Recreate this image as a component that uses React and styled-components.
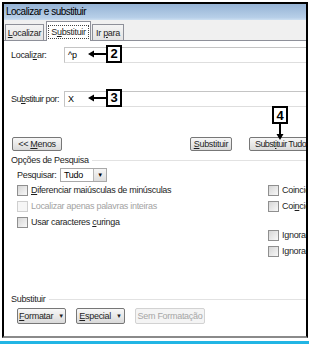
import styled, { createGlobalStyle } from "styled-components";

const GlobalStyle = createGlobalStyle`
  html, body {
    margin: 0;
    padding: 0;
    background: #fff;
  }
  body {
    font-family: "Liberation Sans", Arial, sans-serif;
    font-size: 9px;
    letter-spacing: -0.3px;
    color: #1e1e1e;
  }
`;

const Page = styled.div`
  width: 309px;
  height: 346px;
  overflow: hidden;
  background: #fff;
`;

const Window = styled.div`
  margin: 2px 0 0 2px;
  width: 306px;
  height: 336px;
  box-sizing: border-box;
  border: 2px solid #000;
  border-bottom: 2px solid #8a8a8a;
  display: flex;
  flex-direction: column;
  overflow: hidden;
`;

const TitleBar = styled.div`
  flex: none;
  height: 16px;
  line-height: 16px;
  padding-left: 2px;
  font-size: 10px;
  letter-spacing: -0.5px;
  color: #000;
  background: linear-gradient(#95b3d5, #b7cfe8 85%, #cddff1);
`;

const TabStrip = styled.div`
  flex: none;
  height: 21px;
  box-sizing: border-box;
  display: flex;
  align-items: flex-end;
  padding-left: 1px;
  background: #f0f0f0;
  border-bottom: 1px solid #8e9099;
`;

const Tab = styled.div`
  height: ${(p) => (p.$active ? 20 : 16)}px;
  width: ${(p) => p.$w}px;
  box-sizing: border-box;
  display: flex;
  align-items: center;
  justify-content: center;
  margin-right: ${(p) => (p.$active ? 1 : 2)}px;
  margin-bottom: ${(p) => (p.$active ? -1 : 0)}px;
  border: 1px solid #8e9099;
  border-bottom: none;
  background: ${(p) => (p.$active ? "#fff" : "linear-gradient(#f4f4f4, #e4e4e4)")};
  white-space: nowrap;
`;

const FocusText = styled.span`
  outline: 1px dotted #444;
  outline-offset: 1px;
  padding: 0 1px;
`;

const Body = styled.div`
  position: relative;
  flex: 1;
  width: 352px;
  padding-top: 6px;
  background: #fff;
`;

const FieldRow = styled.div`
  display: flex;
  align-items: center;
  height: 16px;
  padding-left: 7px;
  margin-top: ${(p) => p.$top || 0}px;
`;

const FieldLabel = styled.span`
  width: 53px;
  white-space: nowrap;
  letter-spacing: ${(p) => p.$ls || -0.3}px;
`;

const Field = styled.div`
  position: relative;
  width: 290px;
  height: 16px;
  box-sizing: border-box;
  border: 1px solid #c4c4c4;
  border-bottom-color: #dedede;
  padding-left: 3px;
  line-height: 14px;
  color: #000;
`;

const Callout = styled.div`
  position: absolute;
  left: 23px;
  top: -3px;
  display: flex;
  align-items: center;
`;

const Badge = styled.div`
  width: 16px;
  height: 18px;
  box-sizing: border-box;
  border: 2px solid #000;
  background: #fff;
  display: flex;
  align-items: center;
  justify-content: center;
  font-family: "Liberation Sans", Arial, sans-serif;
  font-weight: bold;
  font-size: 13px;
  letter-spacing: 0;
  color: #000;
`;

const DownCallout = styled.div`
  position: absolute;
  left: 268px;
  top: 65px;
  display: flex;
  flex-direction: column;
  align-items: center;
`;

const ButtonRow = styled.div`
  display: flex;
  align-items: center;
  margin-top: ${(p) => p.$top || 0}px;
  padding-left: ${(p) => p.$left || 0}px;
  gap: ${(p) => p.$gap || 0}px;
`;

const Button = styled.div`
  width: ${(p) => p.$w}px;
  height: ${(p) => p.$h || 14}px;
  box-sizing: border-box;
  display: flex;
  align-items: center;
  justify-content: ${(p) => (p.$start ? "flex-start" : "center")};
  padding-left: ${(p) => (p.$start ? 5 : 0)}px;
  gap: 5px;
  margin-left: ${(p) => p.$ml || 0}px;
  border: 1px solid ${(p) => (p.$disabled ? "#d2d2d2" : "#777")};
  border-radius: 2px;
  background: ${(p) =>
    p.$disabled ? "#f4f4f4" : "linear-gradient(#f7f7f7, #e9e9e9 50%, #d9d9d9)"};
  color: ${(p) => (p.$disabled ? "#a6a6a6" : "#1e1e1e")};
  white-space: nowrap;
  letter-spacing: ${(p) => p.$ls || -0.3}px;
`;

const Caret = styled.span`
  font-size: 6px;
`;

const GroupHeader = styled.div`
  display: flex;
  align-items: center;
  height: 12px;
  padding-left: 7px;
  margin-top: ${(p) => p.$top || 0}px;

  &::after {
    content: "";
    flex: 1;
    margin-left: 3px;
    border-top: 1px solid #e2e2e2;
  }
`;

const SearchRow = styled.div`
  display: flex;
  align-items: center;
  height: 14px;
  margin-top: 2px;
  padding-left: 13px;
`;

const SearchLabel = styled.span`
  width: 43px;
`;

const Select = styled.div`
  width: 47px;
  height: 14px;
  box-sizing: border-box;
  display: flex;
  border: 1px solid #a9a9a9;
  color: #000;
`;

const SelectValue = styled.span`
  flex: 1;
  padding-left: 3px;
  line-height: 12px;
`;

const SelectButton = styled.span`
  width: 12px;
  display: flex;
  align-items: center;
  justify-content: center;
  border-left: 1px solid #b5b5b5;
  background: linear-gradient(#f5f5f5, #dedede);
  font-size: 6px;
  color: #000;
`;

const Options = styled.div`
  display: grid;
  grid-template-columns: 264px 1fr;
`;

const OptionColumn = styled.div`
  display: flex;
  flex-direction: column;
  padding-left: ${(p) => p.$left || 0}px;
`;

const Option = styled.div`
  display: flex;
  align-items: center;
  height: 16px;
  margin-top: ${(p) => p.$top || 0}px;
  color: ${(p) => (p.$disabled ? "#a3a3a3" : "#1e1e1e")};
  white-space: nowrap;
`;

const Box = styled.span`
  flex: none;
  width: 11px;
  height: 11px;
  box-sizing: border-box;
  margin-right: 3px;
  border: 1px solid ${(p) => (p.$disabled ? "#cfcfcf" : "#8f8f8f")};
  background: ${(p) =>
    p.$disabled ? "#f6f6f6" : "linear-gradient(135deg, #d6d6d6, #f8f8f8)"};
`;

const CyanLine = styled.div`
  margin-top: 3px;
  height: 3px;
  background: #22b5e4;
`;

const LeftArrow = () => (
  <svg width="18" height="8" viewBox="0 0 18 8">
    <path d="M0 4 L6 0.5 L6 7.5 Z" fill="#000" />
    <rect x="5" y="3" width="13" height="2" fill="#000" />
  </svg>
);

const DownArrow = () => (
  <svg width="8" height="16" viewBox="0 0 8 16">
    <rect x="3" y="0" width="2" height="11" fill="#000" />
    <path d="M0.5 10 L7.5 10 L4 16 Z" fill="#000" />
  </svg>
);

const App = () => {
  return (
    <Page>
      <GlobalStyle />
      <Window>
        <TitleBar>Localizar e substituir</TitleBar>
        <TabStrip>
          <Tab $w={39}>
            <span>
              <u>L</u>ocalizar
            </span>
          </Tab>
          <Tab $w={45} $active>
            <FocusText>
              S<u>u</u>bstituir
            </FocusText>
          </Tab>
          <Tab $w={32}>
            <span>
              Ir <u>p</u>ara
            </span>
          </Tab>
        </TabStrip>
        <Body>
          <FieldRow>
            <FieldLabel>
              Locali<u>z</u>ar:
            </FieldLabel>
            <Field>
              ^p
              <Callout>
                <LeftArrow />
                <Badge>2</Badge>
              </Callout>
            </Field>
          </FieldRow>
          <FieldRow $top={28}>
            <FieldLabel $ls={-0.5}>
              Su<u>b</u>stituir por:
            </FieldLabel>
            <Field>
              X
              <Callout>
                <LeftArrow />
                <Badge>3</Badge>
              </Callout>
            </Field>
          </FieldRow>

          <DownCallout>
            <Badge>4</Badge>
            <DownArrow />
          </DownCallout>

          <ButtonRow $top={30} $left={8}>
            <Button $w={50}>
              <span>
                &lt;&lt; <u>M</u>enos
              </span>
            </Button>
            <Button $w={42} $ml={128}>
              <span>
                <u>S</u>ubstituir
              </span>
            </Button>
            <Button $w={66} $ml={17} $start $ls={-0.6}>
              <span>
                Subst<u>i</u>tuir Tudo
              </span>
            </Button>
          </ButtonRow>

          <GroupHeader $top={3}>Opções de Pesquisa</GroupHeader>
          <SearchRow>
            <SearchLabel>Pesquisar:</SearchLabel>
            <Select>
              <SelectValue>Tudo</SelectValue>
              <SelectButton>▼</SelectButton>
            </Select>
          </SearchRow>

          <Options>
            <OptionColumn $left={13}>
              <Option>
                <Box />
                <span>
                  <u>D</u>iferenciar maiúsculas de minúsculas
                </span>
              </Option>
              <Option $disabled>
                <Box $disabled />
                <span>Localizar apenas palavras inteiras</span>
              </Option>
              <Option>
                <Box />
                <span>
                  Usar caracteres <u>c</u>uringa
                </span>
              </Option>
            </OptionColumn>
            <OptionColumn>
              <Option>
                <Box />
                <span>Coincidir prefixo</span>
              </Option>
              <Option>
                <Box />
                <span>
                  Coi<u>n</u>cidir sufixo
                </span>
              </Option>
              <Option $top={13}>
                <Box />
                <span>
                  I<u>g</u>norar pontuação
                </span>
              </Option>
              <Option>
                <Box />
                <span>Ignorar espaços em branco</span>
              </Option>
            </OptionColumn>
          </Options>

          <GroupHeader $top={34}>Substituir</GroupHeader>
          <ButtonRow $top={3} $left={13} $gap={10}>
            <Button $w={49} $h={16}>
              <span>
                <u>F</u>ormatar
              </span>
              <Caret>▼</Caret>
            </Button>
            <Button $w={49} $h={16}>
              <span>
                <u>E</u>special
              </span>
              <Caret>▼</Caret>
            </Button>
            <Button $w={70} $h={16} $disabled>
              Sem Formatação
            </Button>
          </ButtonRow>
        </Body>
      </Window>
      <CyanLine />
    </Page>
  );
};

export default App;
